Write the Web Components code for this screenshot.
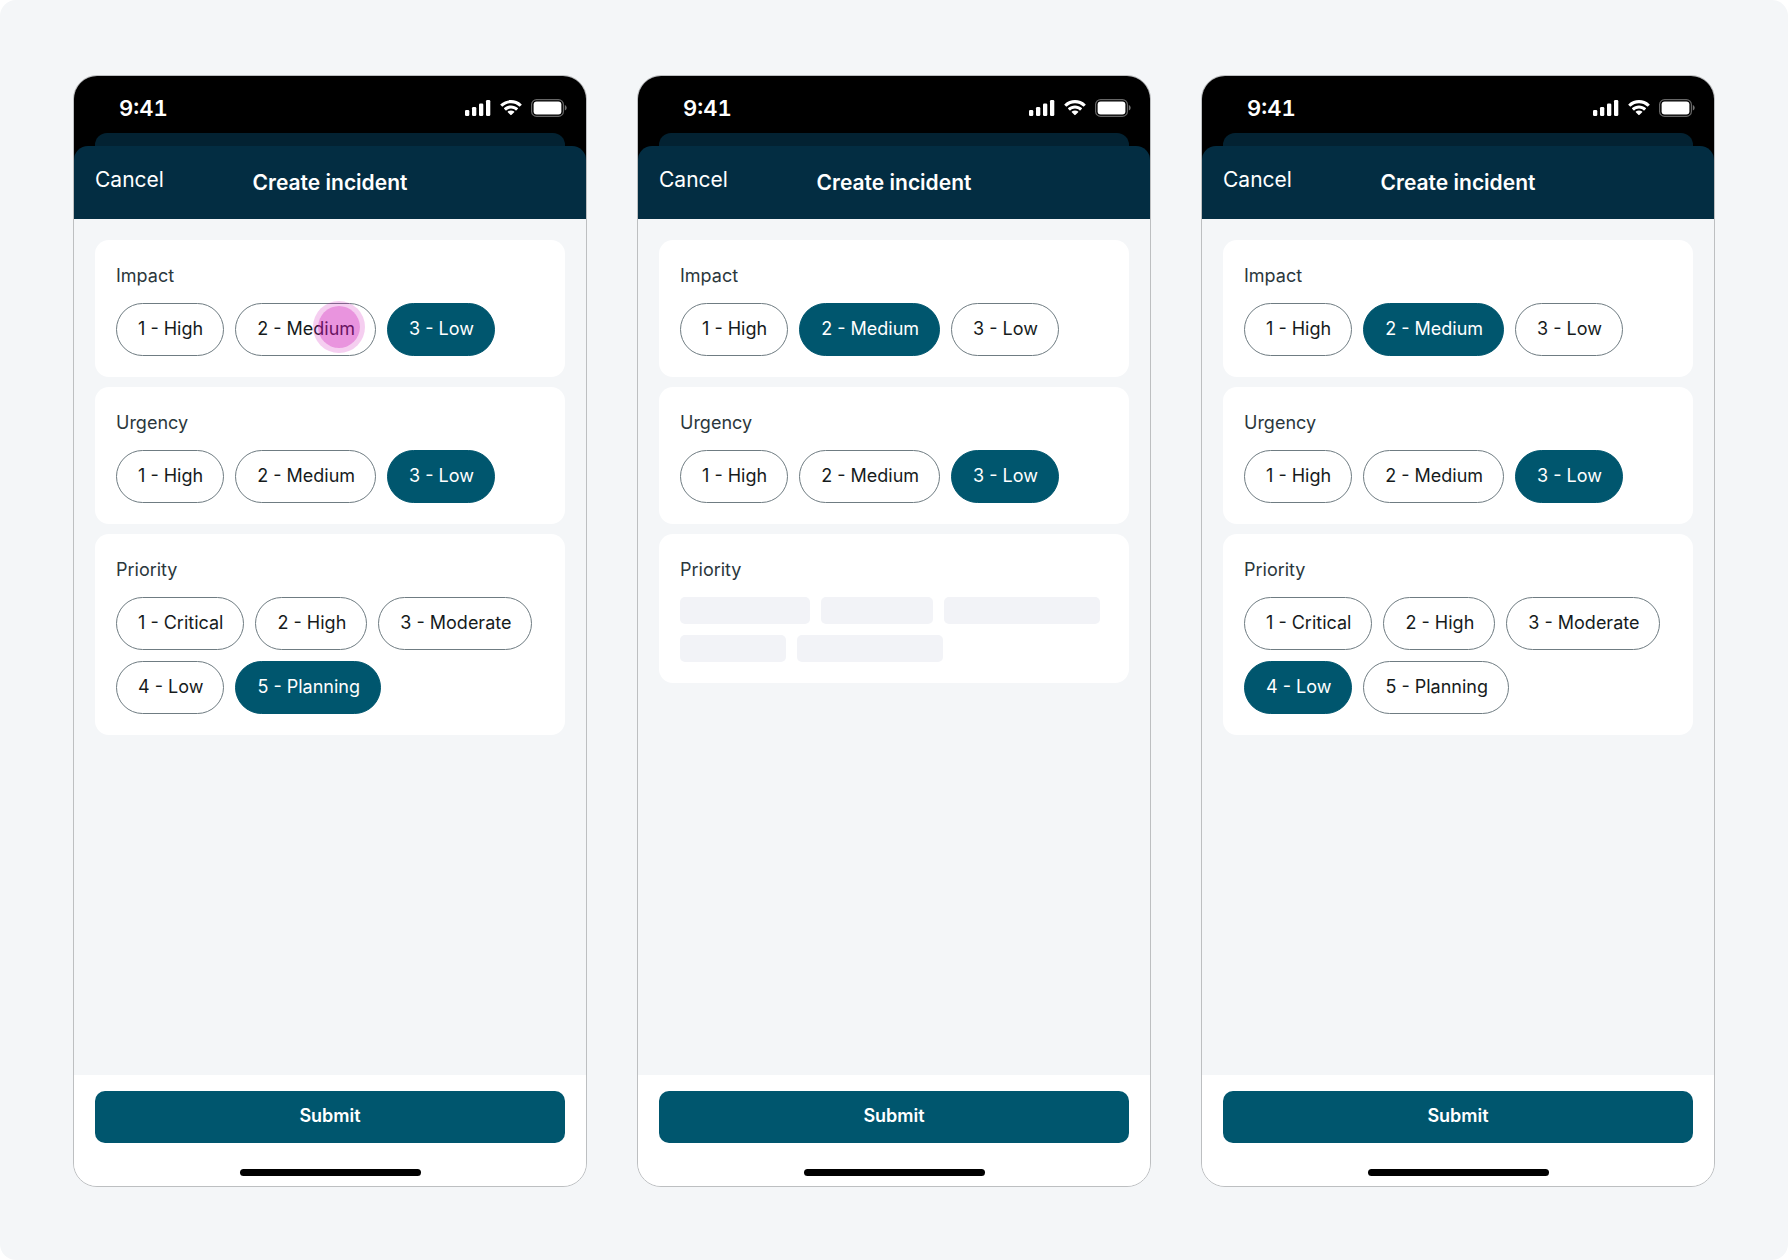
<!DOCTYPE html>
<html lang="en">
<head>
<meta charset="utf-8">
<title>Create incident</title>
<style>
  html{background:#fff;}
  body{margin:0;font-family:Inter,system-ui,sans-serif;color:#161b1c;}
</style>
</head>
<body>

<flow-board>
  <phone-screen heading="Create incident">
    <choice-card label="Impact" options="1 - High|2 - Medium|3 - Low" selected="3 - Low" touch="2 - Medium"></choice-card>
    <choice-card label="Urgency" options="1 - High|2 - Medium|3 - Low" selected="3 - Low"></choice-card>
    <choice-card label="Priority" options="1 - Critical|2 - High|3 - Moderate|4 - Low|5 - Planning" selected="5 - Planning"></choice-card>
  </phone-screen>
  <phone-screen heading="Create incident">
    <choice-card label="Impact" options="1 - High|2 - Medium|3 - Low" selected="2 - Medium"></choice-card>
    <choice-card label="Urgency" options="1 - High|2 - Medium|3 - Low" selected="3 - Low"></choice-card>
    <choice-card label="Priority" loading="130 112 156 106 146"></choice-card>
  </phone-screen>
  <phone-screen heading="Create incident">
    <choice-card label="Impact" options="1 - High|2 - Medium|3 - Low" selected="2 - Medium"></choice-card>
    <choice-card label="Urgency" options="1 - High|2 - Medium|3 - Low" selected="3 - Low"></choice-card>
    <choice-card label="Priority" options="1 - Critical|2 - High|3 - Moderate|4 - Low|5 - Planning" selected="4 - Low"></choice-card>
  </phone-screen>
</flow-board>

<script>
(() => {
  // <flow-board>: the grey canvas, one equal column per screen.
  class FlowBoard extends HTMLElement {
    constructor() {
      super();
      this.attachShadow({ mode: 'open' }).innerHTML = `
        <style>
          :host{display:grid;grid-auto-flow:column;grid-auto-columns:minmax(0,1fr);
            gap:50px;box-sizing:border-box;min-height:100vh;padding:75px 73px 73px;
            background:#f4f6f8;border-radius:16px;}
        </style>
        <slot></slot>`;
    }
  }

  // <status-bar>: clock plus signal, wifi and battery.
  class StatusBar extends HTMLElement {
    constructor() {
      super();
      this.attachShadow({ mode: 'open' }).innerHTML = `
        <style>
          :host{display:flex;align-items:center;justify-content:space-between;
            height:26px;padding:19px 19px 12px 45px;color:#fff;}
          time{font-size:22px;line-height:26px;font-weight:600;font-variant-numeric:tabular-nums;}
          .icons{display:flex;align-items:center;gap:8px;}
          svg{display:block;fill:#fff;}
        </style>
        <time>9:41</time>
        <div class="icons">
          <svg width="26" height="18" viewBox="0 0 26 18" aria-hidden="true">
            <rect x="0" y="11" width="4.300" height="6" rx="1.300"/>
            <rect x="7" y="8" width="4.300" height="9" rx="1.300"/>
            <rect x="14" y="4.500" width="4.300" height="12.500" rx="1.300"/>
            <rect x="21" y="1" width="4.300" height="16" rx="1.300"/>
          </svg>
          <svg width="24" height="18" viewBox="0 0 24 18" aria-hidden="true">
            <path d="M12 4.300c3.200 0 6.100 1.200 8.300 3.300.2.200.4.200.6 0l1.600-1.600c.2-.2.2-.5 0-.7-5.800-5.600-15.200-5.600-21 0-.2.200-.2.500 0 .7l1.600 1.600c.2.200.4.200.6 0 2.200-2.100 5.100-3.300 8.300-3.300z"/>
            <path d="M12 9.600c1.700 0 3.400.7 4.700 1.800.2.200.4.200.6 0l1.600-1.600c.2-.2.2-.5 0-.7-3.900-3.600-9.900-3.600-13.800 0-.2.200-.2.500 0 .7l1.600 1.600c.2.200.4.200.6 0 1.300-1.100 3-1.800 4.700-1.800z"/>
            <path d="M15.200 13.300c.2-.2.200-.5 0-.7-1.800-1.500-4.600-1.500-6.400 0-.2.200-.2.500 0 .7l2.800 2.800c.2.200.5.200.7 0z"/>
          </svg>
          <svg width="36" height="18" viewBox="0 0 36 18" aria-hidden="true">
            <rect x=".6" y=".6" width="31.800" height="16.800" rx="5" fill="none" stroke="#fff" stroke-opacity=".4" stroke-width="1.200"/>
            <rect x="2.600" y="2.600" width="27.800" height="12.800" rx="3"/>
            <path d="M33.800 6v5.600c1.200-.5 1.900-1.600 1.900-2.800s-.7-2.300-1.900-2.800z" fill-opacity=".45"/>
          </svg>
        </div>`;
    }
  }

  // <phone-screen>: device frame with a modal sheet; the form goes in the slot.
  class PhoneScreen extends HTMLElement {
    constructor() {
      super();
      this.attachShadow({ mode: 'open' }).innerHTML = `
        <style>
          :host{display:flex;flex-direction:column;overflow:hidden;
            border:1px solid #bdbfc1;border-radius:24px;background:#f4f6f8;}
          .top{background:#000;}
          .behind{height:13px;margin:0 21px;border-radius:12px 12px 0 0;background:#032232;}
          header{display:grid;grid-template-columns:1fr auto 1fr;align-items:center;
            height:73px;padding:0 21px;border-radius:14px 14px 0 0;background:#032d42;color:#fff;}
          .cancel{justify-self:start;padding:0 0 5px;border:0;background:none;color:inherit;
            font:400 21px/24px Inter,sans-serif;cursor:pointer;}
          h2{margin:0;font-size:21px;line-height:24px;font-weight:600;}
          form{flex:1;display:flex;flex-direction:column;}
          .fields{flex:1;display:flex;flex-direction:column;gap:10px;padding:21px;}
          footer{display:flex;flex-direction:column;align-items:center;gap:26px;
            padding:16px 21px 10px;background:#fff;}
          .submit{align-self:stretch;height:52px;padding:0 0 2px;border:0;border-radius:10px;
            background:#00566e;color:#fff;font:600 18px/22px Inter,sans-serif;cursor:pointer;}
          .home{width:181px;height:7px;border-radius:4px;background:#000;}
        </style>
        <div class="top">
          <status-bar></status-bar>
          <div class="behind"></div>
          <header>
            <button class="cancel" type="button">Cancel</button>
            <h2></h2>
          </header>
        </div>
        <form>
          <div class="fields"><slot></slot></div>
          <footer>
            <button class="submit" type="submit">Submit</button>
            <div class="home"></div>
          </footer>
        </form>`;
      this.shadowRoot.querySelector('form').addEventListener('submit', (e) => e.preventDefault());
    }

    connectedCallback() {
      this.shadowRoot.querySelector('h2').textContent = this.getAttribute('heading') || '';
    }
  }

  /* <choice-card>: a labelled set of radio pills.
     label     caption above the pills
     options   pill captions, split by |
     selected  caption of the checked pill
     touch     caption of the pill under the tap marker
     loading   widths of the placeholder bars, shown instead of pills */
  class ChoiceCard extends HTMLElement {
    constructor() {
      super();
      this.attachShadow({ mode: 'open' }).innerHTML = `
        <style>
          :host{display:block;padding:21px;border-radius:14px;background:#fff;}
          fieldset{min-width:0;margin:0;padding:0;border:0;}
          legend{padding:4px 0 16px;font-size:18px;line-height:22px;color:#2b373c;}
          .row{display:flex;flex-wrap:wrap;gap:11px;}
          label{position:relative;display:block;cursor:pointer;}
          input{position:absolute;inset:0;margin:0;opacity:0;cursor:pointer;}
          .pill{display:block;box-sizing:border-box;padding:14px 20px 15px 21px;border:1px solid #6f7c82;
            border-radius:27px;font-size:18px;line-height:22px;white-space:nowrap;}
          input:checked + .pill{background:#00566e;border-color:#00566e;color:#fff;}
          input:focus-visible + .pill{outline:2px solid #00566e;outline-offset:2px;}
          .tap{position:absolute;right:11px;top:-2px;box-sizing:border-box;width:52px;height:52px;
            border-radius:50%;border:5px solid rgba(204,12,180,.2);
            background:rgba(204,12,180,.44) padding-box;pointer-events:none;}
          .bar{height:27px;border-radius:5px;background:#f2f3f7;}
        </style>
        <fieldset><legend></legend><div class="row"></div></fieldset>`;
    }

    connectedCallback() {
      const label = this.getAttribute('label') || '';
      const row = this.shadowRoot.querySelector('.row');
      this.shadowRoot.querySelector('legend').textContent = label;
      row.textContent = '';

      if (this.hasAttribute('loading')) {
        this.getAttribute('loading').split(' ').forEach((w) => {
          const bar = document.createElement('div');
          bar.className = 'bar';
          bar.style.width = w + 'px';
          row.appendChild(bar);
        });
        return;
      }

      (this.getAttribute('options') || '').split('|').forEach((text) => {
        const el = document.createElement('label');
        el.innerHTML = '<input type="radio"><span class="pill"></span>';
        const input = el.querySelector('input');
        input.name = label.toLowerCase();
        input.value = text;
        el.querySelector('.pill').textContent = text;
        if (text === this.getAttribute('touch')) {
          el.insertAdjacentHTML('beforeend', '<span class="tap"></span>');
        }
        row.appendChild(el);
        input.checked = text === this.getAttribute('selected');
      });
    }
  }

  customElements.define('flow-board', FlowBoard);
  customElements.define('status-bar', StatusBar);
  customElements.define('phone-screen', PhoneScreen);
  customElements.define('choice-card', ChoiceCard);
})();
</script>
</body>
</html>
